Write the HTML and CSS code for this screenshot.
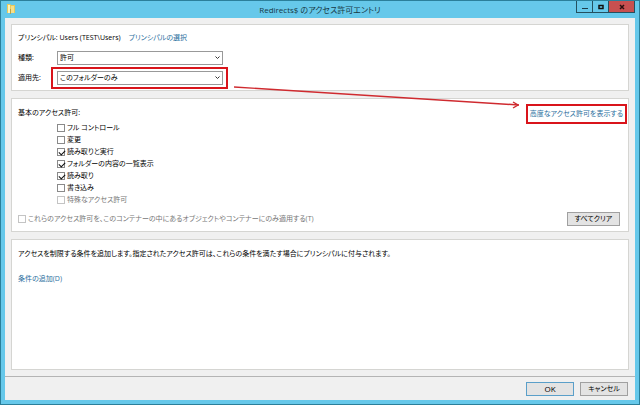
FILE: index.html
```html
<!DOCTYPE html>
<html lang="ja">
<head>
    <meta charset="UTF-8">
    <meta name="viewport" content="width=device-width, initial-scale=1.0">
    <title>Redirects$ のアクセス許可エントリ</title>
    <link rel="stylesheet" href="styles.css">
</head>
<body>
    <div class="window">
        <header class="titlebar">
            <svg class="folder" width="8" height="10" viewBox="0 0 8 10">
                <path d="M0 0h3l1 1h4v8H0z" fill="#e8c95c"/>
                <path d="M1 1h2v8H1z" fill="#fff3b8"/>
                <path d="M4 2h3v7H4z" fill="#f7e08a"/>
                <path d="M3 5h1v5H3z" fill="#b9a04a"/>
            </svg>
            <h1>Redirects$ のアクセス許可エントリ</h1>
            <div class="window-buttons">
                <button type="button" aria-label="最小化">
                    <svg width="6" height="6" viewBox="0 0 6 6"><path d="M0 4h6v1H0z" fill="#1d3c48"/></svg>
                </button>
                <button type="button" aria-label="最大化">
                    <svg width="6" height="6" viewBox="0 0 6 6"><path d="M1 1.5h4v3H1z" fill="none" stroke="#111" stroke-width="1.5"/></svg>
                </button>
                <button type="button" class="close" aria-label="閉じる">
                    <svg width="6" height="6" viewBox="0 0 6 6"><path d="M1 1l4 4M5 1L1 5" stroke="#2b0f0f" stroke-width="1.5"/></svg>
                </button>
            </div>
        </header>

        <main class="content">
            <section class="panel principal">
                <div class="row">
                    <span>プリンシパル: Users (TEST\Users)</span>
                    <a href="#" class="select-principal">プリンシパルの選択</a>
                </div>
                <div class="row">
                    <label for="type">種類:</label>
                    <span class="dropdown">
                        <select id="type"><option>許可</option><option>拒否</option></select>
                        <svg width="5" height="4" viewBox="0 0 5 4"><path d="M.5.5l2 2 2-2" fill="none" stroke="#333"/></svg>
                    </span>
                </div>
                <div class="row">
                    <label for="target">適用先:</label>
                    <span class="dropdown marked">
                        <select id="target"><option>このフォルダーのみ</option></select>
                        <svg width="5" height="4" viewBox="0 0 5 4"><path d="M.5.5l2 2 2-2" fill="none" stroke="#333"/></svg>
                    </span>
                </div>
            </section>

            <section class="panel permissions">
                <div class="permissions-head">
                    <h2>基本のアクセス許可:</h2>
                    <a href="#" class="advanced">高度なアクセス許可を表示する</a>
                </div>
                <div class="checks">
                    <label><input type="checkbox">フル コントロール</label>
                    <label><input type="checkbox">変更</label>
                    <label><input type="checkbox" checked>読み取りと実行</label>
                    <label><input type="checkbox" checked>フォルダーの内容の一覧表示</label>
                    <label><input type="checkbox" checked>読み取り</label>
                    <label><input type="checkbox">書き込み</label>
                    <label class="disabled"><input type="checkbox" disabled>特殊なアクセス許可</label>
                </div>
                <div class="permissions-foot">
                    <label class="disabled"><input type="checkbox" disabled>これらのアクセス許可を、このコンテナーの中にあるオブジェクトやコンテナーにのみ適用する(T)</label>
                    <button type="button" class="btn clear">すべてクリア</button>
                </div>
            </section>

            <section class="panel conditions">
                <p>アクセスを制限する条件を追加します。指定されたアクセス許可は、これらの条件を満たす場合にプリンシパルに付与されます。</p>
                <a href="#">条件の追加(D)</a>
            </section>

            <!-- arrow from the drop-down to the advanced link -->
            <div class="arrow">
                <svg class="arrow-line" viewBox="0 0 284 20" preserveAspectRatio="none">
                    <path d="M0 1L284 19" stroke="#cf2a2f" stroke-width="1.4" fill="none"/>
                </svg>
                <svg class="arrow-head" width="7" height="8" viewBox="0 0 7 8">
                    <path d="M1 1l5 3L1 7" stroke="#cf2a2f" stroke-width="1.4" fill="none"/>
                </svg>
            </div>
        </main>

        <footer class="footer">
            <button type="button" class="btn ok">OK</button>
            <button type="button" class="btn">キャンセル</button>
        </footer>
    </div>
</body>
</html>
```

FILE: styles.css
```css
* {
    box-sizing: border-box;
}
body {
    margin: 0;
    font-family: "Open Sans", "Noto Sans CJK JP", sans-serif;
    font-size: 7px;
    line-height: 12px;
    font-feature-settings: "palt";
    color: #000;
}
button, select, input {
    font: inherit;
    font-feature-settings: inherit;
    color: inherit;
    margin: 0;
}
h1, h2, p {
    margin: 0;
    font-size: inherit;
    font-weight: normal;
}
a {
    color: #2a6f9e;
    text-decoration: none;
}

.window {
    min-height: 100vh;
    display: flex;
    flex-direction: column;
    padding: 0 4px 4px;
    background: #66c8ea;
    border: 1px solid #2b7f9a;
}

/* title bar */
.titlebar {
    display: grid;
    grid-template-columns: 1fr auto 1fr;
    height: 17px;
}
.folder {
    margin: 3px 0 0 2px;
}
.titlebar h1 {
    font-size: 8px;
    line-height: 18px;
    color: #173845;
}
.window-buttons {
    display: flex;
    justify-self: end;
    height: 12px;
    border: 1px solid #24505f;
    border-top: 0;
}
.window-buttons button {
    display: flex;
    align-items: center;
    justify-content: center;
    width: 16px;
    padding: 0;
    border: 0;
    border-right: 1px solid #24505f;
    background: transparent;
}
.window-buttons .close {
    width: 25px;
    border-right: 0;
    background: #c75050;
}

/* panels */
.content {
    position: relative;
    flex: 1;
    display: flex;
    flex-direction: column;
    gap: 7px;
    padding: 6px;
    background: #f0f0f0;
}
.panel {
    padding: 8px 10px 8px 6px;
    background: #fff;
    border: 1px solid #d5d5d2;
}
.principal {
    display: flex;
    flex-direction: column;
    gap: 6px;
    padding-top: 6px;
    padding-bottom: 5px;
}
.row {
    display: flex;
    align-items: center;
    height: 14px;
}
.row label {
    width: 39px;
}
.select-principal {
    margin-left: 8px;
}
.dropdown {
    position: relative;
    width: 166px;
}
.dropdown select {
    display: block;
    appearance: none;
    width: 100%;
    height: 14px;
    padding: 0 12px 0 2px;
    border: 1px solid #999;
    border-radius: 0;
    background: #fff;
    line-height: 12px;
}
.dropdown svg {
    position: absolute;
    right: 3px;
    top: 5px;
    pointer-events: none;
}
.marked::after {
    content: "";
    position: absolute;
    inset: -4px -5px -4px -6px;
    border: 2px solid #d9141b;
    pointer-events: none;
}

/* permissions */
.permissions {
    padding: 5px 1px 5px 6px;
}
.permissions-head {
    display: flex;
    justify-content: space-between;
    align-items: flex-start;
    height: 18px;
}
.permissions-head h2 {
    padding-top: 3px;
}
.advanced {
    padding: 2px;
    border: 2px solid #d9141b;
}
.checks {
    display: grid;
    grid-auto-rows: 12px;
    padding-left: 39px;
}
.permissions label {
    display: flex;
    align-items: center;
    gap: 2px;
}
.permissions .disabled {
    color: #777;
}
.permissions-foot {
    display: flex;
    justify-content: space-between;
    margin-top: 6px;
    padding-right: 7px;
}
input[type="checkbox"] {
    appearance: none;
    width: 8px;
    height: 8px;
    border: 1px solid #8a8a8a;
    background: #fff;
}
input[type="checkbox"]:checked::before {
    content: "";
    display: block;
    width: 5px;
    height: 3px;
    border: solid #111;
    border-width: 0 0 1px 1px;
    transform: translate(1px, 1px) rotate(-45deg);
}
input[type="checkbox"]:disabled {
    border-color: #c4c4c4;
}

/* conditions */
.conditions {
    flex: 1;
}
.conditions p {
    margin-bottom: 13px;
}

.arrow {
    position: absolute;
    top: 68px;
    left: 229px;
    right: 116px;
    height: 24px;
    pointer-events: none;
}
.arrow-line {
    display: block;
    width: 100%;
    height: 20px;
}
.arrow-head {
    position: absolute;
    right: 0;
    top: 15px;
}

/* buttons */
.btn {
    height: 14px;
    padding: 0;
    border: 1px solid #a0a0a0;
    background: #e3e3e3;
    line-height: 12px;
}
.btn.ok {
    border-color: #5a9fc9;
    font-size: 8px;
}
.btn.clear {
    width: 53px;
}
.footer {
    display: flex;
    justify-content: flex-end;
    gap: 6px;
    padding: 5px 7px 4px;
    border-top: 1px solid #b4b4b4;
    background: #f0f0f0;
}
.footer .btn {
    width: 48px;
}
```
